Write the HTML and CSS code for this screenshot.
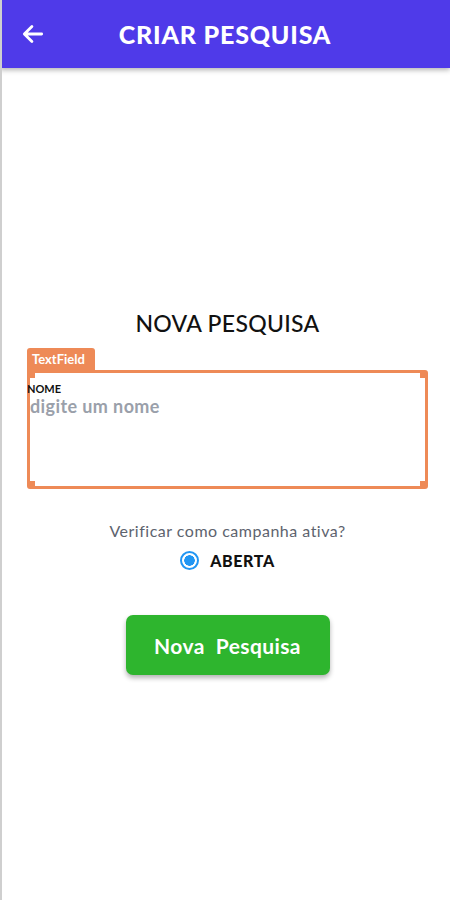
FILE: index.html
```html
<!DOCTYPE html>
<html lang="pt">
<head>
    <meta charset="UTF-8">
    <meta name="viewport" content="width=device-width, initial-scale=1.0">
    <title>Criar Pesquisa</title>
    <link rel="stylesheet" href="styles.css">
</head>
<body>

<div class="header">
    <svg class="back" width="26" height="26" viewBox="0 0 24 24">
        <path d="M20 12H5M11 5l-7 7 7 7" fill="none" stroke="#fff" stroke-width="2.6" stroke-linecap="round" stroke-linejoin="round"/>
    </svg>
    <div class="title">CRIAR PESQUISA</div>
</div>

<div class="content">
    <h2>NOVA PESQUISA</h2>

    <div class="field">
        <div class="tag">TextField</div>
        <div class="box">
            <span class="handle tl"></span>
            <span class="handle tr"></span>
            <span class="handle bl"></span>
            <span class="handle br"></span>
            <div class="label">NOME</div>
            <div class="placeholder">digite um nome</div>
        </div>
    </div>

    <p class="question">Verificar como campanha ativa?</p>
    <label class="radio">
        <span class="dot"></span>
        ABERTA
    </label>

    <button class="submit">Nova&nbsp; Pesquisa</button>
</div>

</body>
</html>
```

FILE: styles.css
```css
body {
    margin: 0;
    padding: 0;
    font-family: Lato, "Open Sans", sans-serif;
    background-color: #fff;
    min-height: 900px;
    border-left: 2px solid #cfcfcf;
    box-sizing: border-box;
}
.header {
    height: 68px;
    margin-left: -2px;
    background-color: #4f3ae9;
    display: flex;
    align-items: center;
    padding: 0 20px;
    box-shadow: 0 2px 5px rgba(0, 0, 0, 0.3);
    position: relative;
}
.header .back {
    flex: none;
}
.header .title {
    flex: 1;
    text-align: center;
    color: #fff;
    font-size: 25px;
    font-weight: 900;
    letter-spacing: 0.8px;
    margin-right: 26px;
}
.content {
    display: flex;
    flex-direction: column;
    align-items: center;
    padding: 0 22px 0 25px;
}
h2 {
    margin: 241px 0 0;
    font-size: 23px;
    font-weight: 500;
    color: #111;
    line-height: 28px;
    letter-spacing: 0.3px;
}
.field {
    align-self: stretch;
    margin-top: 11px;
}
.tag {
    display: inline-block;
    background-color: #ee8a57;
    color: #fff;
    font-size: 13px;
    font-weight: 700;
    padding: 3px 5px 3px 5px;
    border-radius: 3px 3px 0 0;
    width: 58px;
    line-height: 16px;
}
.box {
    position: relative;
    height: 113px;
    border: 3px solid #ee8a57;
    border-radius: 0 3px 3px 3px;
}
.handle {
    position: absolute;
    width: 5px;
    height: 5px;
    background-color: #ee8a57;
}
.tl { top: 0; left: 0; }
.tr { top: 0; right: 0; }
.bl { bottom: 0; left: 0; }
.br { bottom: 0; right: 0; }
.label {
    margin-top: 9px;
    font-size: 11px;
    font-weight: 700;
    color: #111;
    text-indent: -3px;
}
.placeholder {
    font-size: 18px;
    font-weight: 700;
    color: #9aa0aa;
    letter-spacing: 0.4px;
    margin-top: 0;
}
.question {
    margin: 32px 0 0;
    font-size: 16px;
    color: #5d636e;
    letter-spacing: 0.5px;
}
.radio {
    margin-top: 11px;
    display: flex;
    align-items: center;
    gap: 11px;
    font-size: 16px;
    font-weight: 900;
    color: #111;
    letter-spacing: 0.6px;
}
.dot {
    width: 15px;
    height: 15px;
    border: 2px solid #2196f3;
    border-radius: 50%;
    box-sizing: content-box;
    position: relative;
    background: radial-gradient(circle, #2196f3 0 5px, #fff 5.5px);
}
.submit {
    margin-top: 45px;
    width: 204px;
    height: 60px;
    border: none;
    border-radius: 7px;
    background-color: #2eb52e;
    color: #fff;
    font-family: Lato, sans-serif;
    font-size: 21px;
    font-weight: 700;
    letter-spacing: 0.4px;
    box-shadow: 0 3px 5px rgba(0, 0, 0, 0.3);
}
```
